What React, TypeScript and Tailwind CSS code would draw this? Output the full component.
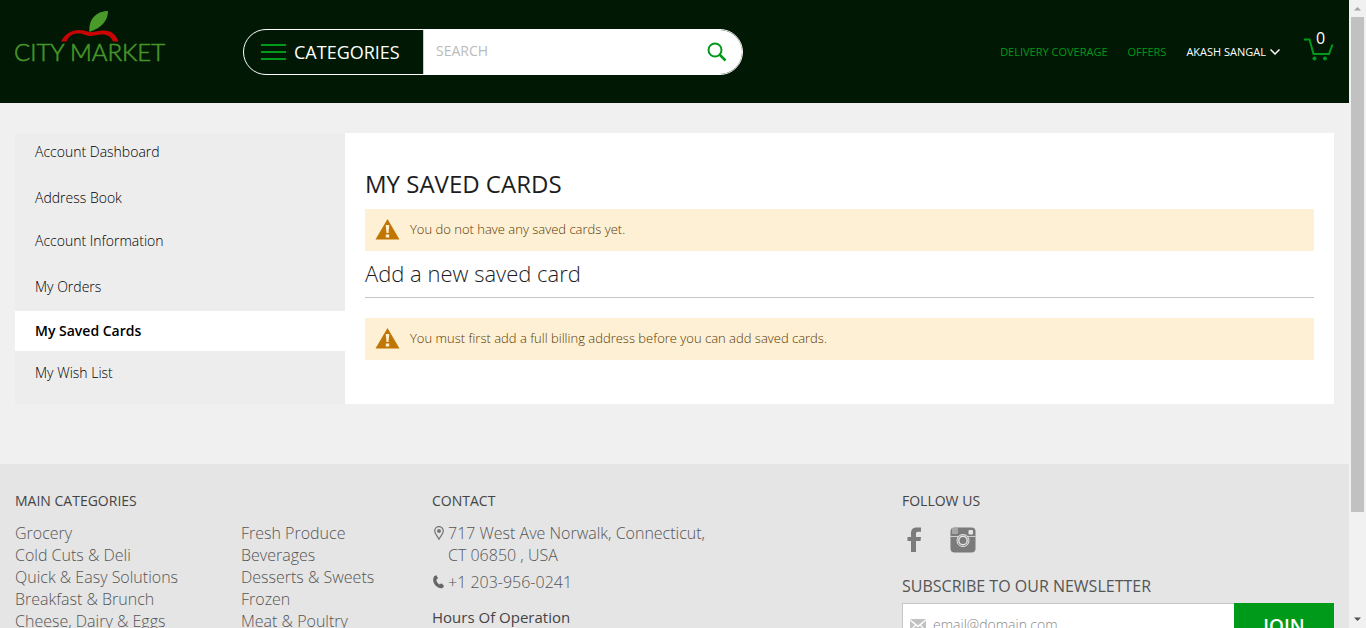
import type { ReactNode } from "react";

const accountLinks = [
  { label: "Account Dashboard", spacing: "h-[38px]" },
  { label: "Address Book", spacing: "mt-2 h-[38px]" },
  { label: "Account Information", spacing: "mt-[5px] h-[38px]" },
  { label: "My Orders", spacing: "mt-2 h-[38px]" },
  { label: "My Saved Cards", spacing: "mt-[5px] h-10", active: true },
  { label: "My Wish List", spacing: "mt-[3px] h-[38px]" },
];

const categoryColumns = [
  ["Grocery", "Cold Cuts & Deli", "Quick & Easy Solutions", "Breakfast & Brunch", "Cheese, Dairy & Eggs"],
  ["Fresh Produce", "Beverages", "Desserts & Sweets", "Frozen", "Meat & Poultry"],
];

function Logo() {
  return (
    <svg width="160" height="60" viewBox="0 0 160 60" role="img" aria-label="City Market">
      <g
        stroke="#47962a"
        strokeWidth="0.6"
        className="fill-[#47962a] font-['Lato',sans-serif] text-[24px] font-light"
      >
        <text x="-1" y="53">CITY</text>
        <text x="55" y="53">MARKET</text>
      </g>
      <path
        d="M46 33.500C50 26 56 22 64 22C69 22 73 24 76 24C80 24 83 22.500 89 22.500C97 22.500 101 27 103.500 33.500L98 33.500C96 29 93 26.500 87 26.500C82 26.500 79 28 75 28C71 28 69 25.500 64 25.500C57 25.500 54 28 51.500 33.500Z"
        fill="#c90404"
      />
      <path d="M74.500 24C73 12 81 3 93 3C93 13 86 20 74.500 24Z" fill="#4a9a2a" />
    </svg>
  );
}

function CartIcon() {
  return (
    <svg width="30" height="24" viewBox="0 0 30 24" aria-hidden="true">
      <path d="M0 1.500H5.500L9.500 16H25L28.500 6.500" fill="none" stroke="#009a1a" strokeWidth="2" />
      <circle cx="10.500" cy="20.500" r="2" fill="#009a1a" />
      <circle cx="21" cy="20.500" r="2" fill="#009a1a" />
    </svg>
  );
}

function Warning({ children }: { children: ReactNode }) {
  return (
    <div className="flex h-[42px] items-center gap-[10px] bg-[#fdf0d5] pb-px pl-[10px] text-[13px] font-light text-[#5a3700]">
      <svg width="25" height="21" viewBox="0 0 25 21" aria-hidden="true">
        <path d="M12.500 0L24.500 20.500H0.500Z" fill="#c07600" />
        <path d="M10.700 6H14.300L13.500 14H11.500Z" fill="#fdf0d5" />
        <rect x="10.800" y="15.500" width="3.400" height="3" fill="#fdf0d5" />
      </svg>
      <p>{children}</p>
    </div>
  );
}

function Header() {
  return (
    <header className="flex h-[103px] shrink-0 items-start bg-[#001804] pl-[15px] pr-[15px]">
      <a href="#home" className="mt-2 w-[228px] shrink-0">
        <Logo />
      </a>
      <form className="mt-[29px] flex h-[46px] w-[500px] overflow-hidden rounded-full border border-white">
        <button type="button" className="flex w-[179px] shrink-0 items-center pl-[17px] text-[18px] text-white">
          <svg width="25" height="16" viewBox="0 0 25 16" className="mr-2" aria-hidden="true">
            <path d="M0 1H25M0 8H25M0 15H25" stroke="#009a1a" strokeWidth="2" />
          </svg>
          CATEGORIES
        </button>
        <div className="flex min-w-0 flex-1 items-center border-l border-[#ccc] bg-white pr-[15px]">
          <input
            aria-label="Search"
            placeholder="SEARCH"
            className="h-full min-w-0 flex-1 pb-[3px] pl-3 text-[14px] outline-none placeholder:text-[#bbb]"
          />
          <button type="button" aria-label="Search">
            <svg width="20" height="20" viewBox="0 0 20 20" fill="none" stroke="#009a1a" aria-hidden="true">
              <circle cx="8" cy="8" r="6.500" strokeWidth="2" />
              <path d="M12.500 12.500L18.500 18.500" strokeWidth="2.500" />
            </svg>
          </button>
        </div>
      </form>
      <nav className="ml-auto flex h-[104px] items-center gap-5 text-[11px] text-[#009a1a]">
        <a href="#delivery">DELIVERY COVERAGE</a>
        <a href="#offers">OFFERS</a>
        <button type="button" className="flex items-center gap-1 font-medium text-white">
          AKASH SANGAL
          <svg width="10" height="6" viewBox="0 0 10 6" fill="none" stroke="white" strokeWidth="1.500" aria-hidden="true">
            <path d="M0.500 0.500L5 5L9.500 0.500" />
          </svg>
        </button>
        <a href="#cart" aria-label="Cart" className="relative ml-1 mt-[-4px]">
          <CartIcon />
          <span className="absolute -top-[10px] left-3 text-[16px] leading-5 font-medium text-white">0</span>
        </a>
      </nav>
    </header>
  );
}

function Footer() {
  return (
    <footer className="mt-[60px] flex min-h-[250px] shrink-0 items-start bg-[#e5e5e5] px-[15px] pt-[26px] text-[16px] leading-[22px] font-light text-[#555]">
      <section className="w-[417px] shrink-0">
        <h2 className="text-[14px] leading-[22px] font-normal text-[#444]">MAIN CATEGORIES</h2>
        <div className="mt-[10px] flex">
          {categoryColumns.map((column) => (
            <ul key={column[0]} className="w-[226px] last:w-auto">
              {column.map((name) => (
                <li key={name}>
                  <a href="#category">{name}</a>
                </li>
              ))}
            </ul>
          ))}
        </div>
      </section>
      <section className="w-[470px] shrink-0">
        <h2 className="text-[14px] leading-[22px] font-normal text-[#444]">CONTACT</h2>
        <address className="mt-[10px] flex gap-1 not-italic">
          <svg width="12" height="14" viewBox="0 0 12 14" className="mt-1" fill="none" stroke="#777" aria-hidden="true">
            <path d="M7 13.300C6 10.500 2.700 8 2.700 4.900A4.300 4.300 0 0 1 11.300 4.900C11.300 8 8 10.500 7 13.300Z" strokeWidth="1.300" />
            <circle cx="7" cy="5" r="2" fill="#777" stroke="none" />
          </svg>
          <span>
            717 West Ave Norwalk, Connecticut,
            <br />
            CT 06850 , USA
          </span>
        </address>
        <a href="tel:+12039560241" className="mt-[5px] flex gap-1">
          <svg width="12" height="14" viewBox="0 0 12 14" className="mt-1" fill="#666" aria-hidden="true">
            <path d="M2.300 1L4.500 0.300L6 3.500L4.300 4.700C4.500 7 6 8.700 7.700 9.500L9.300 8.200L12 10.700L11 12.800C7 15.500 -2 8 2.300 1Z" />
          </svg>
          +1 203-956-0241
        </a>
        <h3 className="mt-[13px] text-[15px] leading-[22px] font-normal text-[#444]">Hours Of Operation</h3>
      </section>
      <section className="min-w-0 flex-1">
        <h2 className="text-[14px] leading-[22px] font-normal text-[#444]">FOLLOW US</h2>
        <div className="mt-[15px] flex items-center gap-[29px] pl-[5px]">
          <a href="#facebook" aria-label="Facebook">
            <svg width="14" height="26" viewBox="0 0 14 26" fill="#7b7b7b" aria-hidden="true">
              <path d="M4 25V14H0.500V10H4V6.500C4 2.500 6 0.500 9.500 0.500H14V4.800H11C9.500 4.800 9 5.500 9 6.800V10H14L13.500 14H9V25Z" />
            </svg>
          </a>
          <a href="#instagram" aria-label="Instagram">
            <svg width="26" height="26" viewBox="0 0 26 26" aria-hidden="true">
              <rect x="0.500" y="0.500" width="25" height="25" rx="4" fill="#7b7b7b" />
              <path d="M0.500 9.500H25.500M3 1V7M5 1V7M7 1V7" stroke="#e5e5e5" strokeWidth="0.800" />
              <rect x="18.500" y="3" width="4.500" height="4.500" rx="1" fill="#e5e5e5" />
              <circle cx="13" cy="13.500" r="6.500" fill="#e5e5e5" />
              <circle cx="13" cy="13.500" r="5.500" fill="#7b7b7b" />
              <circle cx="13" cy="13.500" r="4.200" fill="none" stroke="#e5e5e5" strokeWidth="1.400" />
            </svg>
          </a>
        </div>
        <label htmlFor="newsletter" className="mt-[22px] block font-normal text-[#555]">
          SUBSCRIBE TO OUR NEWSLETTER
        </label>
        <form className="mt-[6px] flex h-[44px]">
          <div className="flex min-w-0 flex-1 items-center gap-[7px] border border-r-0 border-[#c6c6c6] bg-white pl-[7px]">
            <svg width="16" height="12" viewBox="0 0 16 12" aria-hidden="true">
              <path d="M0 0H16L8 6.500ZM0 1.500L5 6L0 11ZM16 1.500L11 6L16 11ZM0.500 12L6 6.800L8 8.300L10 6.800L15.500 12Z" fill="#c2c2c2" />
            </svg>
            <input
              id="newsletter"
              type="email"
              placeholder="email@domain.com"
              className="h-full min-w-0 flex-1 pb-px text-[14px] font-light outline-none placeholder:text-[#888]"
            />
          </div>
          <button type="button" className="w-[100px] bg-[#009a1a] pt-[2px] text-[19px] font-semibold text-white">
            JOIN
          </button>
        </form>
      </section>
    </footer>
  );
}

function Scrollbar() {
  return (
    <div className="flex w-[17px] shrink-0 flex-col items-center bg-[#f1f1f1]" aria-hidden="true">
      <svg width="17" height="17" viewBox="0 0 17 17">
        <path d="M5 10.500L8.500 7L12 10.500Z" fill="#a3a3a3" />
      </svg>
      <div className="w-[13px] flex-[495] bg-[#c1c1c1]" />
      <div className="flex-[99]" />
      <svg width="17" height="17" viewBox="0 0 17 17">
        <path d="M5 6.500L8.500 10L12 6.500Z" fill="#505050" />
      </svg>
    </div>
  );
}

export default function App() {
  return (
    <div className="flex h-screen overflow-hidden bg-[#f0f0f0] font-['Open_Sans',sans-serif] text-[#1d1d1d]">
      <div className="flex min-w-0 flex-1 flex-col overflow-hidden">
        <Header />
        <div className="mx-[15px] mt-[30px] flex shrink-0">
          <nav className="w-[330px] shrink-0 bg-[#ededed] pb-3 text-[14px] font-light text-black">
            <ul>
              {accountLinks.map((link) => (
                <li key={link.label} className={link.spacing}>
                  <a
                    href="#account"
                    className={
                      link.active
                        ? "flex h-full items-center bg-white pb-[2px] pl-5 font-semibold"
                        : "flex h-full items-center pb-[2px] pl-5"
                    }
                  >
                    {link.label}
                  </a>
                </li>
              ))}
            </ul>
          </nav>
          <main className="min-w-0 flex-1 bg-white px-5 pt-[35px]">
            <h1 className="text-[24px] leading-8 font-normal">MY SAVED CARDS</h1>
            <div className="mt-[9px]">
              <Warning>You do not have any saved cards yet.</Warning>
            </div>
            <h2 className="h-[47px] border-b border-[#c6c6c6] pt-[7px] text-[22px] leading-[30px] font-light">
              Add a new saved card
            </h2>
            <div className="mt-5">
              <Warning>You must first add a full billing address before you can add saved cards.</Warning>
            </div>
          </main>
        </div>
        <Footer />
      </div>
      <Scrollbar />
    </div>
  );
}
